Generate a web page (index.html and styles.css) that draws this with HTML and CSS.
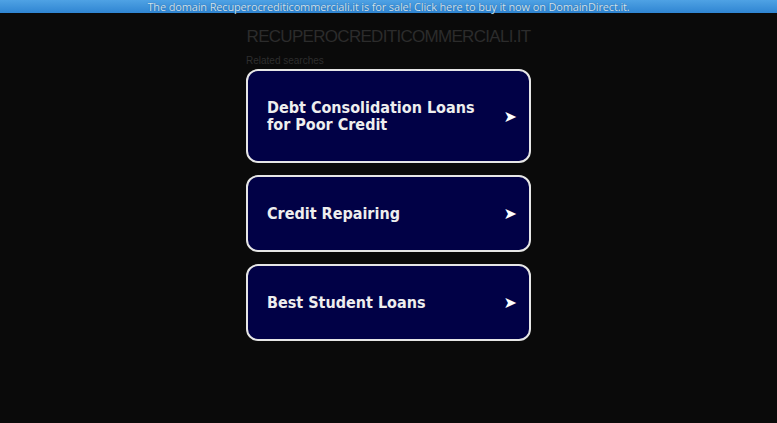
FILE: index.html
```html
<!DOCTYPE html>
<html lang="en">
<head>
    <meta charset="UTF-8">
    <meta name="viewport" content="width=device-width, initial-scale=1.0">
    <title>recuperocrediticommerciali.it</title>
    <link rel="stylesheet" href="styles.css">
</head>
<body>
    <a class="sale-banner" href="#">The domain Recuperocrediticommerciali.it is for sale! Click here to buy it now on DomainDirect.it.</a>

    <div class="container">
        <h1 class="domain-title">RECUPEROCREDITICOMMERCIALI.IT</h1>
        <p class="related">Related searches</p>

        <!-- related search links -->
        <div class="link-list">
            <a class="link-card" href="#">
                <span class="link-text">Debt Consolidation Loans for Poor Credit</span>
                <span class="arrow">&#10148;</span>
            </a>
            <a class="link-card" href="#">
                <span class="link-text">Credit Repairing</span>
                <span class="arrow">&#10148;</span>
            </a>
            <a class="link-card" href="#">
                <span class="link-text">Best Student Loans</span>
                <span class="arrow">&#10148;</span>
            </a>
        </div>
    </div>
</body>
</html>
```

FILE: styles.css
```css
body {
    font-family: "Liberation Sans", Arial, sans-serif;
    background-color: #0a0a0a;
    margin: 0;
    padding: 0;
}
.sale-banner {
    display: block;
    height: 13px;
    line-height: 13px;
    text-align: center;
    font-family: "Open Sans", sans-serif;
    font-size: 11px;
    letter-spacing: -0.15px;
    color: #cfe3f3;
    text-decoration: none;
    text-shadow: 0 0 1px #1b4f80;
    background: linear-gradient(to bottom, #4fa2e4, #2f85d2);
}
.container {
    width: 285px;
    margin: 0 auto;
}
.domain-title {
    margin: 14px 0 0;
    font-size: 17px;
    font-weight: normal;
    letter-spacing: -0.7px;
    line-height: 20px;
    text-align: center;
    color: #2c2c2c;
}
.related {
    margin: 8px 0 2px;
    font-size: 10px;
    line-height: 12px;
    color: #2e2e2e;
}
.link-list {
    display: flex;
    flex-direction: column;
    gap: 12px;
}
.link-card {
    display: flex;
    align-items: center;
    justify-content: space-between;
    padding: 28px 12px 28px 19px;
    background: #010146;
    border: 2px solid #e6e6e6;
    border-radius: 12px;
    color: #eeeeee;
    text-decoration: none;
}
.link-text {
    font-family: "DejaVu Sans Condensed", "DejaVu Sans", sans-serif;
    font-stretch: condensed;
    font-size: 16px;
    font-weight: bold;
    line-height: 17px;
    max-width: 220px;
}
.arrow {
    font-family: "DejaVu Sans", sans-serif;
    font-size: 16px;
    line-height: 17px;
    color: #ffffff;
}
```
